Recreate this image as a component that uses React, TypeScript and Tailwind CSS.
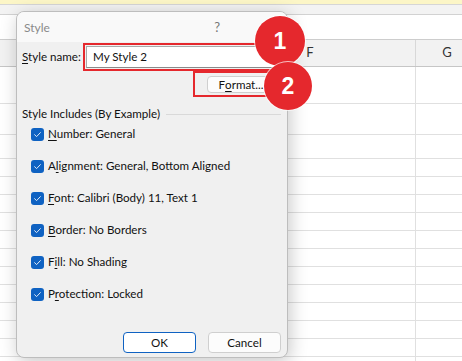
import React from 'react';

const rows = [37, 31, 24, 18, 18, 18, 18, 18, 18, 18, 18, 18, 18, 18, 18];

const includes: { pre: string; key: string; post: string }[] = [
  { pre: '', key: 'N', post: 'umber: General' },
  { pre: 'A', key: 'l', post: 'ignment: General, Bottom Aligned' },
  { pre: '', key: 'F', post: 'ont: Calibri (Body) 11, Text 1' },
  { pre: '', key: 'B', post: 'order: No Borders' },
  { pre: 'F', key: 'i', post: 'll: No Shading' },
  { pre: 'P', key: 'r', post: 'otection: Locked' },
];

function Check() {
  return (
    <span className="flex h-[13px] w-[13px] shrink-0 items-center justify-center rounded-[3px] bg-[#0f62c2]">
      <svg width="9" height="9" viewBox="0 0 9 9" fill="none">
        <path d="M1.6 4.7 L3.6 6.6 L7.4 2.6" stroke="#dfe9f7" strokeWidth="1" strokeLinecap="round" strokeLinejoin="round" />
      </svg>
    </span>
  );
}

function Badge({ n, className }: { n: string; className: string }) {
  return (
    <div
      className={`absolute flex items-center justify-center rounded-full bg-[#e5282d] ring-1 ring-white/70 font-['Liberation_Sans',Arial,sans-serif] text-[23px] font-bold text-white ${className}`}
    >
      {n}
    </div>
  );
}

export default function App() {
  return (
    <div className="relative h-[361px] w-[462px] overflow-hidden bg-white font-['Lato','Noto_Sans',sans-serif] text-[11.6px] text-[#111]">
      {/* sheet behind */}
      <div className="h-[5px] border-b border-[#d6d6d6] bg-[#fcf6c7]" />
      <div className="h-[10px] border-b border-[#d2d2d2] bg-[#f3f3f3]" />
      <div className="h-[25px] border-b border-[#cdcdcd] bg-white" />
      <div className="flex h-[27px] border-b border-[#c6c6c6] bg-[#f2f2f2] text-[13px] text-[#333]">
        <div className="w-[205px] shrink-0" />
        <div className="flex w-[211px] shrink-0 items-center justify-center border-r border-[#d8d8d8]">F</div>
        <div className="flex w-[62px] shrink-0 items-center justify-center">G</div>
      </div>
      {rows.map((h, i) => (
        <div key={i} className="flex border-b border-[#e0e0e0]" style={{ height: h }}>
          <div className="w-[416px] shrink-0 border-r border-[#e0e0e0]" />
        </div>
      ))}

      {/* dialog */}
      <div className="absolute left-[16px] top-[11px] flex h-[347px] w-[272px] flex-col overflow-hidden rounded-[8px] border border-[#bdbdbd] bg-[#f0f0f0] shadow-[2px_4px_18px_rgba(0,0,0,0.22)]">
        <div className="flex h-[30px] shrink-0 items-center bg-[#f9f9f9] pl-[7px] pt-[2px] text-[12px] text-[#8a8a8a]">
          <span>Style</span>
          <span className="ml-auto mr-[40px] text-[13px] text-[#777]">?</span>
          <svg width="10" height="10" viewBox="0 0 10 10" className="mr-[17px]">
            <path d="M1 1 L9 9 M9 1 L1 9" stroke="#777" strokeWidth="1" />
          </svg>
        </div>

        <div className="flex flex-1 flex-col pl-[5px] pr-[6px] pb-[4px]">
          <div className="mt-[1px] flex items-center">
            <span className="w-[61px] shrink-0 whitespace-nowrap leading-[16px]">
              <u className="underline-offset-2">S</u>tyle name:
            </span>
            <div className="h-[28px] w-[200px] shrink-0 border-2 border-[#e5282d] p-[1px]">
              <div className="flex h-full items-center border border-[#a9a9a9] border-b-[#8a8a8a] bg-white pl-[6px]">
                My Style 2
              </div>
            </div>
          </div>

          <div className="ml-[171px] h-[26px] w-[92px] border-2 border-[#e5282d] pl-[12px] pt-[3px]">
            <div className="flex h-[17px] w-[68px] items-center justify-center whitespace-nowrap rounded-[4px] border border-[#cfcfcf] bg-[#fcfcfc] leading-none">
              F<u className="underline-offset-2">o</u>rmat...
            </div>
          </div>

          <div className="mt-[9px] flex h-[16px] items-center">
            <span className="whitespace-nowrap">Style Includes (By Example)</span>
            <div className="ml-[6px] h-px flex-1 bg-[#d9d9d9]" />
          </div>

          <div className="mt-[4px] flex flex-col gap-[16px] pl-[9px]">
            {includes.map((it) => (
              <div key={it.post} className="flex h-[16px] items-center gap-[4px]">
                <Check />
                <span className="whitespace-nowrap">
                  {it.pre}
                  <u className="underline-offset-2">{it.key}</u>
                  {it.post}
                </span>
              </div>
            ))}
          </div>

          <div className="mt-auto flex justify-end gap-[12px]">
            <button className="flex h-[21px] w-[73px] items-center justify-center rounded-[4px] border border-[#0f62c2] bg-white">
              OK
            </button>
            <button className="flex h-[21px] w-[73px] items-center justify-center rounded-[4px] border border-[#cfcfcf] bg-[#fcfcfc]">
              Cancel
            </button>
          </div>
        </div>
      </div>

      <Badge n="1" className="left-[255px] top-[16px] h-[50px] w-[50px]" />
      <Badge n="2" className="left-[264px] top-[62px] h-[48px] w-[48px]" />
    </div>
  );
}
